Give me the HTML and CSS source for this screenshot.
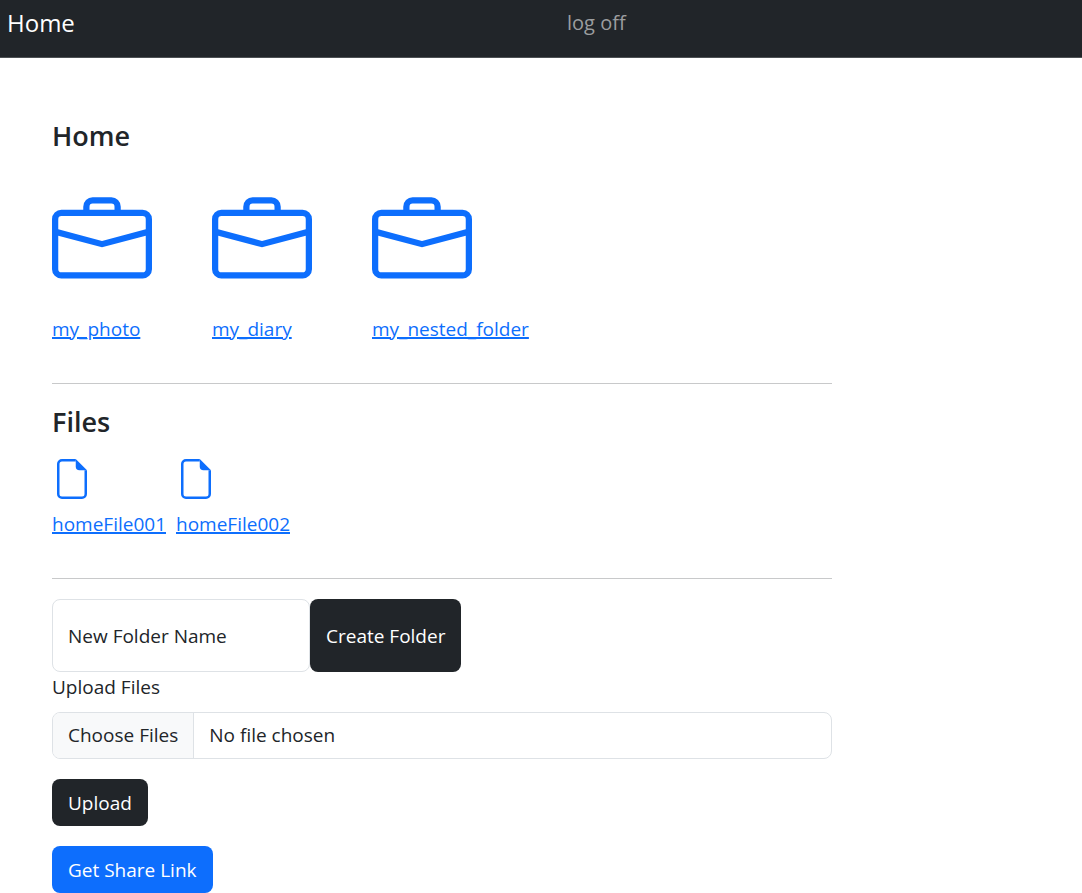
FILE: index.html
```html
<!DOCTYPE html>
<html lang="en">
<head>
<meta charset="utf-8">
<meta name="viewport" content="width=device-width, initial-scale=1">
<title>Home</title>
<link rel="stylesheet" href="styles.css">
</head>
<body>
<svg class="sprite" aria-hidden="true">
  <symbol id="briefcase" viewBox="0 0 16 16">
    <path d="M6.5 1A1.5 1.5 0 0 0 5 2.5V3H1.5A1.5 1.5 0 0 0 0 4.5v8A1.5 1.5 0 0 0 1.5 14h13a1.5 1.5 0 0 0 1.5-1.5v-8A1.5 1.5 0 0 0 14.5 3H11v-.5A1.5 1.5 0 0 0 9.5 1h-3zm0 1h3a.5.5 0 0 1 .5.5V3H6v-.5a.5.5 0 0 1 .5-.5zM1.5 4h13a.5.5 0 0 1 .5.5v1.616L8 7.983 1 6.116V4.5a.5.5 0 0 1 .5-.5zM1 7.15l7 1.867 7-1.867V12.5a.5.5 0 0 1-.5.5h-13a.5.5 0 0 1-.5-.5z" fill-rule="evenodd"/>
  </symbol>
  <symbol id="file" viewBox="0 0 16 16">
    <path d="M4 0h5.5v1H4a1 1 0 0 0-1 1v12a1 1 0 0 0 1 1h8a1 1 0 0 0 1-1V4.5h1V14a2 2 0 0 1-2 2H4a2 2 0 0 1-2-2V2a2 2 0 0 1 2-2z"/>
    <path d="M9.5 3V0L14 4.5h-3A1.5 1.5 0 0 1 9.5 3z"/>
  </symbol>
</svg>
<nav class="navbar">
  <a class="brand" href="#">Home</a>
  <a class="logoff" href="#">log off</a>
</nav>
<main class="content">
  <h1 class="heading">Home</h1>
  <div class="folders">
    <a class="folder" href="#"><svg class="folder-icon" aria-hidden="true"><use href="#briefcase"/></svg><span>my_photo</span></a>
    <a class="folder" href="#"><svg class="folder-icon" aria-hidden="true"><use href="#briefcase"/></svg><span>my_diary</span></a>
    <a class="folder" href="#"><svg class="folder-icon" aria-hidden="true"><use href="#briefcase"/></svg><span>my_nested_folder</span></a>
  </div>
  <hr class="divider">
  <h2 class="heading">Files</h2>
  <div class="files">
    <a class="file" href="#"><svg class="file-icon" aria-hidden="true"><use href="#file"/></svg><span>homeFile001</span></a>
    <a class="file" href="#"><svg class="file-icon" aria-hidden="true"><use href="#file"/></svg><span>homeFile002</span></a>
  </div>
  <hr class="divider">
  <form class="create">
    <input class="name-input" type="text" placeholder="New Folder Name" aria-label="New Folder Name">
    <button class="btn btn-dark" type="button">Create Folder</button>
  </form>
  <form class="upload">
    <label class="upload-label" for="uploads">Upload Files</label>
    <input class="file-input" id="uploads" type="file" multiple>
    <button class="btn btn-dark" type="button">Upload</button>
  </form>
  <button class="btn btn-primary" type="button">Get Share Link</button>
</main>
</body>
</html>
```
FILE: styles.css
```css
*, *::before, *::after { box-sizing: border-box; }

body {
  margin: 0;
  background: #fff;
  color: #212529;
  font: 19px/30px "Segoe UI", "Open Sans", "Noto Sans", sans-serif;
}

.sprite { display: none; }

.navbar {
  display: grid;
  grid-template-columns: 1fr 1fr;
  align-items: start;
  min-height: 58px;
  padding: 8px 0;
  background: #212529;
  border-bottom: 1px solid #4d5154;
}

.navbar a { text-decoration: none; }
.brand { padding-left: 7px; color: #fff; font-size: 24px; }
.logoff { padding-left: 26px; color: #9b9d9f; font-size: 20px; }

.content { max-width: 884px; padding: 60px 52px 0; }

.heading { margin: 0; font-size: 27px; line-height: 36px; font-weight: 600; }

.folders { display: flex; gap: 60px; margin-top: 37px; }
.folder { display: flex; flex-direction: column; gap: 23px; width: 100px; color: #0d6efd; white-space: nowrap; text-decoration-thickness: 2px; }
.folder-icon { width: 100px; height: 100px; fill: currentColor; }

.divider { height: 1px; margin: 39px 0 20px; border: 0; background: #c8c9ca; }

.files { display: flex; gap: 10px; margin-top: 19px; }
.file { display: flex; flex-direction: column; gap: 10px; color: #0d6efd; text-decoration-thickness: 2px; }
.file-icon { width: 40px; height: 40px; fill: currentColor; }

.create { display: flex; height: 73px; }

.name-input {
  width: 258px;
  padding: 0 15px;
  border: 1px solid #dee2e6;
  border-radius: 8px;
  color: inherit;
  font: inherit;
}
.name-input::placeholder { color: #212529; opacity: 1; }

.btn {
  min-height: 47px;
  padding: 8px 16px;
  border: 0;
  border-radius: 8px;
  color: #fff;
  font: inherit;
}
.btn-dark { background: #212529; }
.btn-primary { background: #0d6efd; }

.upload { margin-bottom: 20px; }
.upload-label { display: block; margin-bottom: 10px; }

.file-input {
  display: block;
  width: 100%;
  height: 47px;
  margin-bottom: 20px;
  overflow: hidden;
  border: 1px solid #dee2e6;
  border-radius: 8px;
  font: inherit;
  line-height: 45px;
}
.file-input::file-selector-button {
  height: 45px;
  margin: 0 15px 0 0;
  padding: 0 15px;
  border: 0;
  border-right: 1px solid #dee2e6;
  background: #f8f9fa;
  color: inherit;
  font: inherit;
}
```
